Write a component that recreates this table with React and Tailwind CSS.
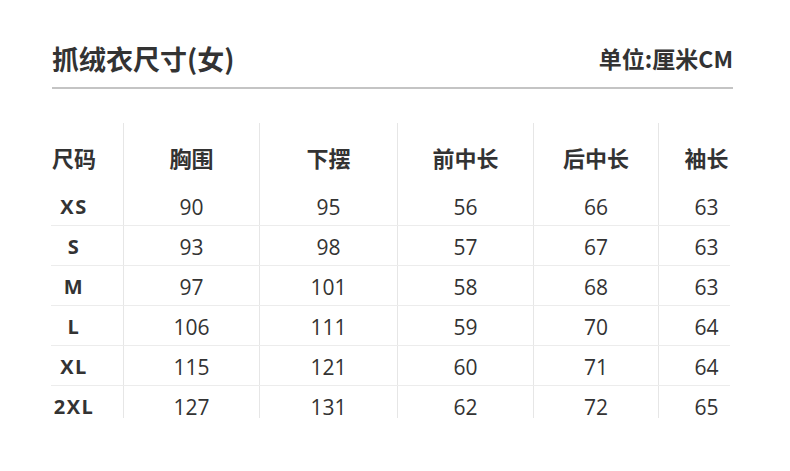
import React from "react";

const headers = ["尺码", "胸围", "下摆", "前中长", "后中长", "袖长"];
const rows = [
  ["XS", "90", "95", "56", "66", "63"],
  ["S", "93", "98", "57", "67", "63"],
  ["M", "97", "101", "58", "68", "63"],
  ["L", "106", "111", "59", "70", "64"],
  ["XL", "115", "121", "60", "71", "64"],
  ["2XL", "127", "131", "62", "72", "65"],
];

const grid = "grid grid-cols-[72px_136px_138px_136px_125px_96px] w-[703px]";
const latin = { fontFamily: '"Open Sans", "Noto Sans CJK SC", sans-serif' };

function Row({ cells, header, first }) {
  return (
    <div className={`w-[679px] ${first ? "" : "border-t border-[#ececec]"}`}>
      <div className={`${grid} ${header ? "h-[62px]" : first ? "h-[40px]" : "h-[39px]"}`}>
        {cells.map((c, i) => (
          <div
            key={i}
            className={`flex items-center ${i === 0 ? "" : "justify-center border-l border-[#e6e6e6]"} ${header ? "pt-[6px] text-[22px] font-bold" : first ? "pt-[4px]" : "pt-[3px]"}`}
          >
            {i === 0 ? (
              <div
                className={`w-[46px] text-center ${header ? "" : "font-bold tracking-[1.5px] text-[20px]"}`}
                style={header ? undefined : latin}
              >
                {c}
              </div>
            ) : (
              <span style={header ? undefined : latin} className={header ? "" : "font-normal text-[21px]"}>
                {c}
              </span>
            )}
          </div>
        ))}
      </div>
    </div>
  );
}

export default function App() {
  return (
    <div
      className="w-[790px] h-[471px] bg-white text-[#333333] overflow-hidden"
      style={{ fontFamily: '"Noto Sans CJK SC", "Noto Sans", sans-serif' }}
    >
      <div className="pt-[40px] pl-[52px] w-[733px]">
        <div className="flex h-[36px] items-center justify-between">
          <div className="text-[27px] font-bold leading-none">抓绒衣尺寸(女)</div>
          <div className="text-[23px] font-bold leading-none">单位:厘米CM</div>
        </div>
        <div className="mt-[11px] h-[2px] bg-[#c4c4c4]" />
      </div>
      <div className="mt-[34px] ml-[51px] h-[295px] overflow-hidden leading-none">
        <Row cells={headers} header first />
        {rows.map((r, i) => (
          <Row key={i} cells={r} first={i === 0} />
        ))}
      </div>
    </div>
  );
}
